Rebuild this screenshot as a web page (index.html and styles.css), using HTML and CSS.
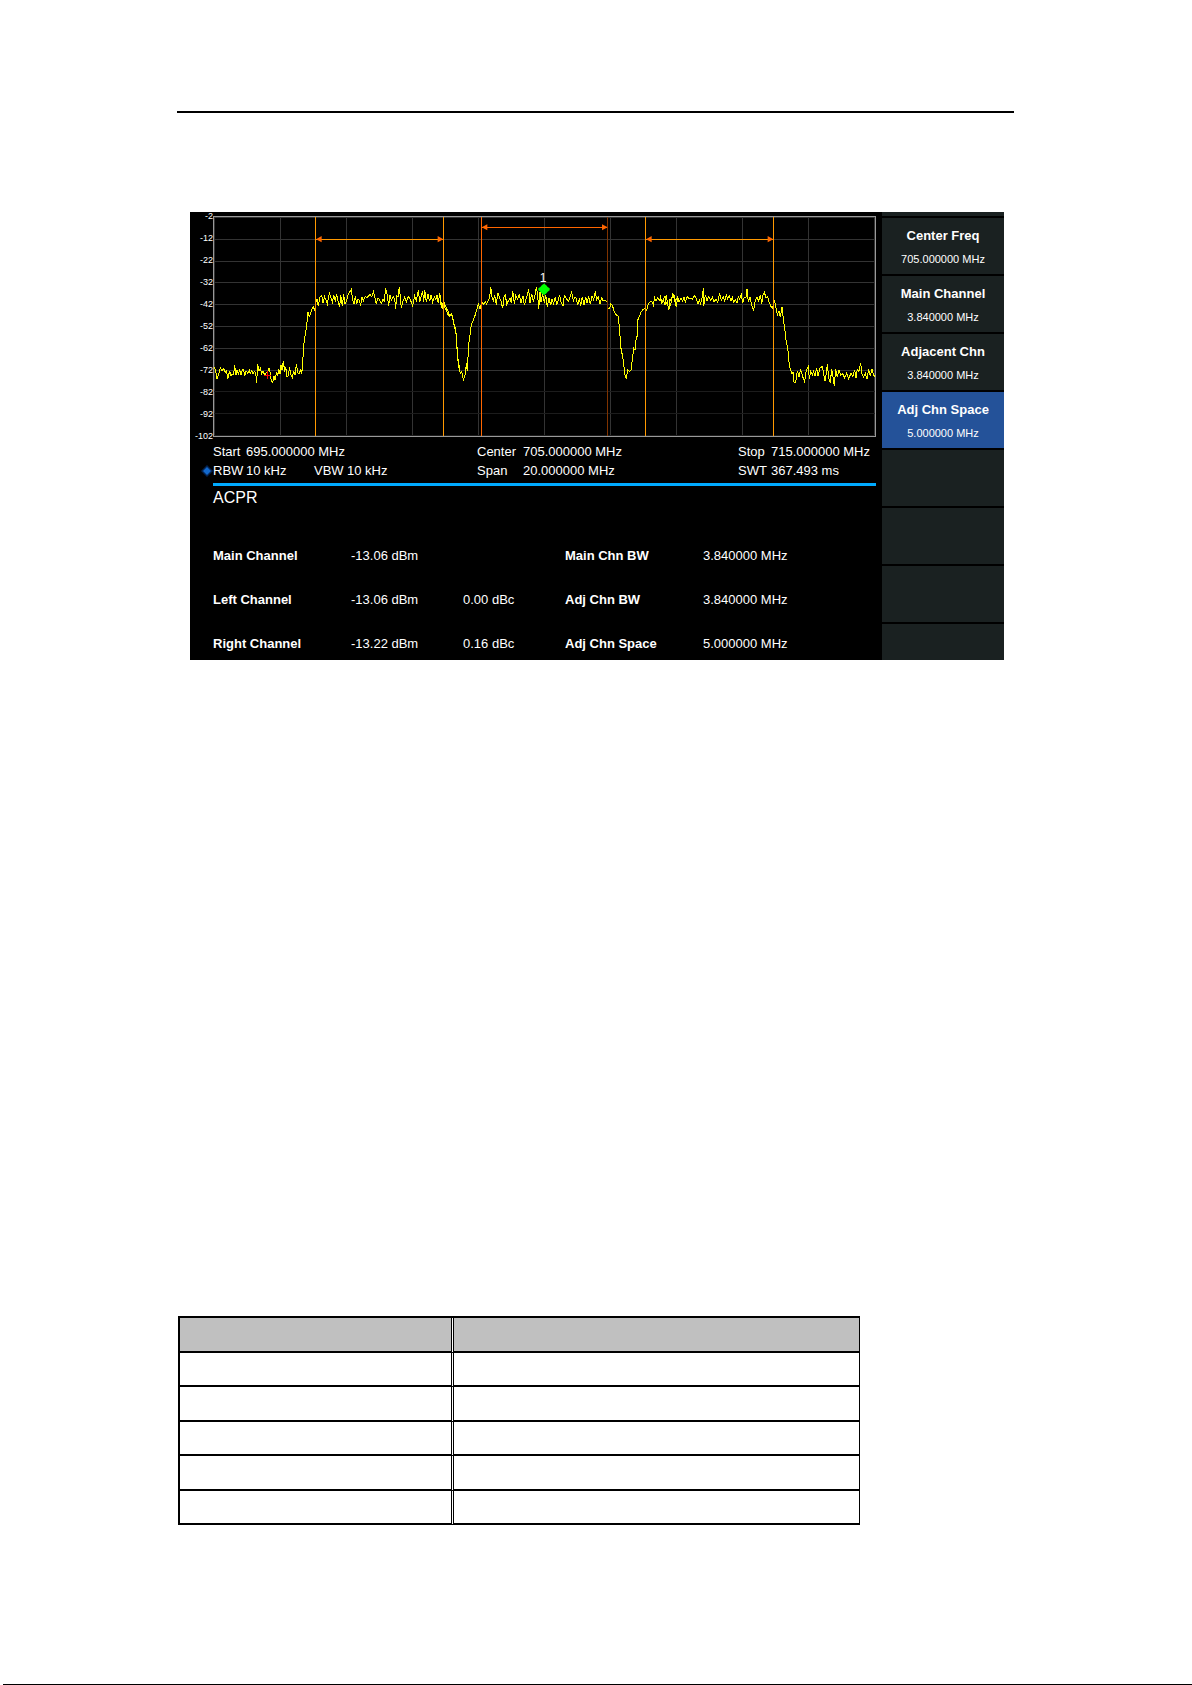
FILE: index.html
```html
<!DOCTYPE html>
<html lang="en">
<head>
<meta charset="UTF-8">
<meta name="viewport" content="width=device-width, initial-scale=1.0">
<title>ACPR Measurement</title>
<link rel="stylesheet" href="styles.css">
</head>
<body>
<main class="page">
    <hr class="page-rule">

    <section class="screen">
        <div class="display">
            <div class="plot">
                <div class="scale">
                    <span>-2</span>
                    <span>-12</span>
                    <span>-22</span>
                    <span>-32</span>
                    <span>-42</span>
                    <span>-52</span>
                    <span>-62</span>
                    <span>-72</span>
                    <span>-82</span>
                    <span>-92</span>
                    <span>-102</span>
                </div>
                <!-- three units per screen pixel -->
                <svg class="graph" viewBox="99 48 1989 663" role="img" aria-label="Spectrum trace">
                    <path class="grid" d="M103.500 51V708M301.500 51V708M499.500 51V708M697.500 51V708M895.500 51V708M1093.500 51V708M1291.500 51V708M1489.500 51V708M1687.500 51V708M1885.500 51V708M2083.500 51V708"/>
                    <path class="grid" d="M102 52.500H2085M102 118.500H2085M102 184.500H2085M102 247.500H2085M102 313.500H2085M102 379.500H2085M102 445.500H2085M102 511.500H2085"/>
                    <path class="grid dim" d="M102 574.500H2085M102 640.500H2085M102 706.500H2085"/>
                    <rect class="frame" x="100.500" y="49.500" width="1986" height="660"/>

                    <polyline class="trace" points="103,502 107,512 111,537 116,523 121,503 126,514 131,505 136,518 140,512 143,538 149,512 153,528 157,522 161,524 164,496 168,526 171,510 175,522 179,511 183,524 187,508 191,510 194,527 198,513 203,519 208,511 211,521 215,512 219,522 223,514 227,518 230,549 233,493 237,512 241,505 245,520 249,513 254,525 259,518 263,516 267,504 270,515 274,543 278,547 282,528 285,540 289,519 293,527 296,508 300,522 303,494 306,509 310,482 314,516 317,500 321,531 325,526 329,502 332,524 337,534 341,512 345,525 349,492 353,518 358,521 361,511 365,523 368,490 371,435 374,415 378,390 381,365 384,337 388,350 392,341 396,326 401,321 404,334 407,309 411,298 415,319 420,290 425,286 429,308 434,290 438,301 442,312 448,280 452,292 457,307 461,286 466,302 470,283 475,308 479,322 482,284 487,318 491,283 495,311 499,304 503,288 508,278 514,268 518,300 522,311 526,289 530,312 534,297 538,301 542,317 546,290 550,304 555,290 561,293 565,288 570,284 575,290 580,275 585,294 589,312 594,293 599,301 604,310 609,298 613,302 617,265 622,285 626,318 630,284 634,300 640,291 644,296 647,326 650,287 654,291 658,260 661,294 664,325 669,303 674,292 679,306 684,290 689,295 694,307 698,319 704,287 709,302 715,270 719,306 723,292 728,272 731,307 734,270 739,307 744,283 749,304 753,285 758,306 763,290 768,298 771,286 775,310 779,280 783,305 787,328 791,305 797,319 803,331 809,349 814,342 820,360 823,379 827,386 830,420 833,475 838,510"/>
                    <g transform="translate(780)">
                        <polyline class="trace" points="0,295 4,322 9,308 14,322 18,328 24,344 30,348 35,341 40,365 45,388 49,405 52,465 56,490 61,521 65,514 70,540 76,522 79,490 82,513 86,433 90,405 94,375 99,362 104,350 109,333 115,313 120,328 126,305 131,314 136,306 140,312 145,302 149,292 152,260 156,291 160,302 164,285 169,315 173,278 178,291 183,304 188,325 192,292 196,282 200,314 205,302 210,295 214,310 218,272 223,312 227,287 233,298 238,282 243,309 249,287 253,315 258,298 263,280 266,268 270,308 275,281 280,304 284,291 289,262 293,285 296,327 300,276 303,305 308,281 313,309 317,284 322,321 327,294 332,316 336,297 341,311 346,290 350,316 354,303 359,284 363,307 369,319 373,286 380,297 386,304 390,290 395,277 400,303 405,291 409,296 413,316 418,295 422,317 427,290 432,314 437,290 441,308 446,291 451,313 456,288 461,299 466,274 470,300 475,291 480,311 485,294 490,303 496,302 501,305"/>
                        <polyline class="trace" points="505,327 509,325 513,311 518,319 523,335 529,345 535,349 539,392 542,440 547,465 551,490 554,522 559,537 563,510 568,514 573,510 577,480 581,445 585,450 589,409 592,410 593,361 598,350 603,337 609,328 615,325 620,332 625,310 631,305 636,305 640,315 644,294 648,304 653,293 658,300 662,293 666,309 670,301 675,287 679,311 683,305 685,330 690,298 694,305 698,283 703,288 707,303 712,292 718,306"/>
                    </g>
                    <g transform="translate(1440)">
                        <polyline class="trace" points="0,285 4,309 9,300 15,314 19,286 22,308 26,330 33,308 37,284 42,292 46,309 49,320 53,290 57,306 63,294 68,303 72,292 76,305 82,290 87,297 93,294 97,297 104,287 109,296 114,311 118,300 122,311 127,291 130,263 131,318 136,285 141,302 146,290 152,302 157,292 162,306 168,298 173,307 179,280 184,301 190,291 194,302 199,286 203,297 208,288 213,302 217,292 221,307 226,300 231,309 235,290 239,297 244,284 248,310 253,291 258,293 261,267 265,305 270,291 275,316 281,331 286,302 291,290 296,304 301,284 305,311 309,286 313,276 318,294 323,290 327,305 332,318 338,324 343,301 347,319 352,345 357,333 361,351 366,320 371,365 375,393 379,430 383,440 386,480 391,509 396,521 399,515 402,546 407,548 412,512 417,532 421,510 425,518 430,536 434,545 439,510 445,499 448,536 452,514 457,524 461,514 465,529 470,503 474,528 480,504 487,499 491,521 495,543 499,518 502,493 506,534 511,548 515,506 519,532 523,558 527,507 532,532 537,509 542,526 548,521 554,534 560,519 566,536 573,520 579,529 584,509 588,534 592,508 597,514 602,490 606,522 611,531 616,521 621,538 626,508 631,528 636,508 640,524 645,531"/>
                    </g>

                    <path class="span-line" d="M406.500 51V708M790.500 51V708M1396.500 51V708M1780.500 51V708M408 118.500H789M1398 118.500H1779"/>
                    <path class="span-line main" d="M904.500 51V708M906 82.500H1281"/>
                    <path class="span-line edge" d="M1282.500 51V708"/>
                    <path class="arrow" d="M408 118l17-10v19zM790 118l-17-10v19zM1398 118l17-10v19zM1780 118l-17-10v19zM905 82l17-9v18zM1283 82l-17-9v18z"/>

                    <path class="cross" d="M252 525.500H274M262.500 514V537"/>
                    <path class="marker" d="M1092 251l6 4 5 6 6 4v6l-6 4-5 6-6 4-6-4-5-6-6-4v-6l6-4 5-6z"/>
                    <text class="marker-label" x="1089" y="245">1</text>
                </svg>
            </div>

            <div class="readout">
                <span>Start</span><span class="wide">695.000000 MHz</span>
                <span>Center</span><span>705.000000 MHz</span>
                <span>Stop</span><span>715.000000 MHz</span>
                <span class="rbw"><svg class="coupled" viewBox="0 0 12 12" aria-hidden="true"><path class="halo" d="M6 0l6 6-6 6-6-6z"/><path class="core" d="M6 2l4 4-4 4-4-4z"/></svg>RBW</span><span>10 kHz</span>
                <span>VBW</span><span>10 kHz</span>
                <span>Span</span><span>20.000000 MHz</span>
                <span>SWT</span><span>367.493 ms</span>
            </div>

            <div class="results">
                <h1>ACPR</h1>
                <table class="values">
                    <colgroup><col class="name"><col class="power"><col class="ratio"><col class="name"><col></colgroup>
                    <tr>
                        <th scope="row">Main Channel</th><td>-13.06 dBm</td><td></td>
                        <th scope="row">Main Chn BW</th><td>3.840000 MHz</td>
                    </tr>
                    <tr>
                        <th scope="row">Left Channel</th><td>-13.06 dBm</td><td>0.00 dBc</td>
                        <th scope="row">Adj Chn BW</th><td>3.840000 MHz</td>
                    </tr>
                    <tr>
                        <th scope="row">Right Channel</th><td>-13.22 dBm</td><td>0.16 dBc</td>
                        <th scope="row">Adj Chn Space</th><td>5.000000 MHz</td>
                    </tr>
                </table>
            </div>
        </div>

        <div class="softkeys">
            <div class="key top"></div>
            <button class="key"><b>Center Freq</b><span>705.000000 MHz</span></button>
            <button class="key"><b>Main Channel</b><span>3.840000 MHz</span></button>
            <button class="key"><b>Adjacent Chn</b><span>3.840000 MHz</span></button>
            <button class="key active"><b>Adj Chn Space</b><span>5.000000 MHz</span></button>
            <div class="key"></div>
            <div class="key"></div>
            <div class="key"></div>
            <div class="key last"></div>
        </div>
    </section>

    <table class="params">
        <tr class="head"><td></td><td></td></tr>
        <tr><td></td><td></td></tr>
        <tr><td></td><td></td></tr>
        <tr><td></td><td></td></tr>
        <tr><td></td><td></td></tr>
        <tr><td></td><td></td></tr>
    </table>
</main>
<footer class="page-end"></footer>
</body>
</html>
```
FILE: styles.css
```css
* {
    box-sizing: border-box;
}

body {
    margin: 0;
    min-height: 100vh;
    display: flex;
    flex-direction: column;
    background: #fff;
    font-family: "Liberation Sans", Arial, sans-serif;
}

.page {
    padding: 111px 178px 0 177px;
}

.page-rule {
    height: 2px;
    margin: 0;
    border: none;
    background: #000;
}

/* analyzer screen */
.screen {
    display: flex;
    gap: 6px;
    margin: 99px 10px 0 13px;
    background: #000;
    color: #fff;
    font-size: 13px;
}

.display {
    flex: 1;
    min-width: 0;
    padding: 4px 0 8px 23px;
}

.plot {
    position: relative;
}

.scale {
    position: absolute;
    top: -5px;
    bottom: -5px;
    right: 100%;
    display: flex;
    flex-direction: column;
    justify-content: space-between;
    font-size: 9px;
    line-height: 11px;
    text-align: right;
}

.graph {
    display: block;
    width: 100%;
}

.graph path,
.graph polyline,
.graph rect {
    fill: none;
    stroke-width: 3;
    shape-rendering: crispEdges;
}

.graph .grid {
    stroke: #333;
}

.graph .dim {
    stroke: #1c1c1c;
}

.graph .frame {
    stroke: #999;
}

.graph .trace {
    stroke: #ff0;
}

.graph .span-line {
    stroke: #ff9900;
}

.graph .main {
    stroke: #ff6600;
}

.graph .edge {
    stroke: #803300;
}

.graph .arrow {
    fill: #ff6600;
    shape-rendering: auto;
}

.graph .cross {
    stroke: #f00;
}

.graph .marker {
    fill: #0f0;
    shape-rendering: auto;
}

.marker-label {
    fill: #fff;
    font-size: 36px;
    text-anchor: middle;
}

.readout {
    display: grid;
    grid-template-columns: 33px 68px 33px 130px 46px 215px 33px 1fr;
    margin: 5px 0 3px;
    line-height: 19px;
    white-space: nowrap;
}

.readout .wide {
    grid-column: span 3;
}

.rbw {
    position: relative;
}

.coupled {
    position: absolute;
    top: 4px;
    right: 100%;
    width: 12px;
    height: 12px;
}

.coupled .halo {
    fill: #032352;
}

.coupled .core {
    fill: #1268cc;
}

.results {
    border-top: 3px solid #00aaff;
}

.results h1 {
    margin: 0 0 38px;
    font-size: 16px;
    font-weight: normal;
    line-height: 24px;
}

.values {
    width: 100%;
    table-layout: fixed;
    border-collapse: collapse;
    line-height: 16px;
    text-align: left;
    white-space: nowrap;
}

.values th,
.values td {
    padding: 0 0 28px;
}

.values tr:last-child > * {
    padding-bottom: 0;
}

.values .name {
    width: 138px;
}

.values .power {
    width: 112px;
}

.values .ratio {
    width: 102px;
}

.softkeys {
    width: 122px;
    display: flex;
    flex-direction: column;
    gap: 2px;
}

.key {
    height: 56px;
    padding: 9px 0 0;
    border: none;
    display: flex;
    flex-direction: column;
    align-items: center;
    gap: 6px;
    background: #1a2121;
    color: #fff;
    font-family: inherit;
    font-size: 11px;
    line-height: 16px;
}

.key b {
    font-size: 13px;
    line-height: 18px;
}

.key.top {
    height: 4px;
    padding: 0;
}

.key.active {
    background: #245299;
}

.key.last {
    height: auto;
    flex: 1;
}

/* parameter table */
.params {
    width: 100%;
    max-width: 682px;
    height: 209px;
    margin: 656px 0 0 1px;
    table-layout: fixed;
    border-spacing: 0;
    border-top: 2px solid #000;
}

.params td {
    height: 34px;
    padding: 0;
    border-bottom: 2px solid #000;
}

.params .head td {
    background: #c0c0c0;
    background-clip: padding-box;
}

.params td:first-child {
    width: 276px;
    border-left: 2px solid #000;
    border-right: 3px double #000;
}

.params td:last-child {
    border-right: 1px solid #000;
}

.page-end {
    height: 1px;
    margin: auto 0 0 3px;
    background: #000;
}
```
